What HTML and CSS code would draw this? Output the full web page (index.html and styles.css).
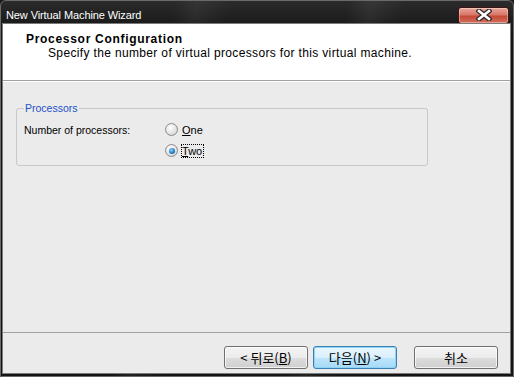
FILE: index.html
```html
<!doctype html>
<html>
  <head>
    <title>New Virtual Machine Wizard</title>
    <link rel="stylesheet" href="styles.css">
  </head>
  <body>
    <div class="window">
      <div class="titlebar">
        <span class="title">New Virtual Machine Wizard</span>
        <button class="close" type="button" aria-label="Close">
          <svg width="16" height="12" viewBox="0 0 16 12">
            <path d="M3 2 L13 10 M13 2 L3 10" stroke="#2a2a2a" stroke-width="5" stroke-linecap="square"/>
            <path d="M3 2 L13 10 M13 2 L3 10" stroke="#fff" stroke-width="2.6" stroke-linecap="square"/>
          </svg>
        </button>
      </div>

      <div class="client">
        <div class="header">
          <div class="header-title">Processor Configuration</div>
          <div class="header-sub">Specify the number of virtual processors for this virtual machine.</div>
        </div>

        <div class="content">
          <fieldset class="group">
            <legend>Processors</legend>
            <div class="row">
              <span class="label">Number of processors:</span>
              <label class="radio">
                <span class="dot"></span>
                <span><u>O</u>ne</span>
              </label>
            </div>
            <div class="row">
              <span class="label"></span>
              <label class="radio checked">
                <span class="dot"></span>
                <span class="focus"><u>T</u>wo</span>
              </label>
            </div>
          </fieldset>
        </div>

        <div class="footer">
          <button class="btn" type="button">&lt; 뒤로(<u>B</u>)</button>
          <button class="btn default" type="button">다음(<u>N</u>) &gt;</button>
          <button class="btn cancel" type="button">취소</button>
        </div>
      </div>
    </div>
  </body>
</html>
```

FILE: styles.css
```css
html, body {
    margin: 0;
    padding: 0;
    background: #1b1b1b;
}
body {
    font-family: "Liberation Sans", Arial, sans-serif;
    font-size: 12px;
}

.window {
    width: 514px;
    height: 377px;
    box-sizing: border-box;
    display: flex;
    flex-direction: column;
    border: 1px solid #6a6a6a;
    border-radius: 6px 6px 0 0;
    background:
        linear-gradient(100deg, transparent 0 60%, rgba(255,255,255,0.06) 64%, transparent 70%),
        linear-gradient(100deg, transparent 0 30%, rgba(255,255,255,0.05) 34%, transparent 40%),
        linear-gradient(180deg, #2b2b2b 0, #161616 30px, #141414 100%);
}

/* title bar */
.titlebar {
    height: 23px;
    display: flex;
    align-items: center;
    padding: 0 4px 0 5px;
}
.title {
    color: #fff;
    font-size: 11px;
    letter-spacing: -0.1px;
    padding-top: 5px;
}
.close {
    margin-left: auto;
    margin-top: 5px;
    width: 51px;
    height: 17px;
    padding: 0;
    display: flex;
    align-items: center;
    justify-content: center;
    border: 1px solid #3d1410;
    border-radius: 3px;
    background: linear-gradient(180deg, #e9a699 0, #d8776a 45%, #c44a36 55%, #d5705d 100%);
    box-shadow: inset 0 0 0 1px rgba(255,255,255,0.35);
}

/* client area */
.client {
    flex: 1;
    margin: 0 3px 3px 2px;
    display: flex;
    flex-direction: column;
    background: #ebebeb;
    box-shadow: 0 0 0 1px #7a7a7a;
}

.header {
    height: 57px;
    box-sizing: border-box;
    padding: 8px 0 0 23px;
    background: #fff;
    border-bottom: 1px solid #a0a0a0;
    line-height: 14px;
    color: #000;
}
.header-title {
    font-weight: bold;
    letter-spacing: 0.7px;
}
.header-sub {
    margin-left: 22px;
    letter-spacing: 0.35px;
}

.content {
    flex: 1;
    padding: 19px 0 0 13px;
    border-top: 1px solid #fff;
    font-size: 10.5px;
}

/* group box */
.group {
    width: 412px;
    box-sizing: border-box;
    margin: 0;
    padding: 4px 0 4px 7px;
    border: 1px solid #c8c8c8;
    border-radius: 3px;
}
.group legend {
    padding: 0 1px;
    color: #1d52c8;
    line-height: 14px;
}
.row {
    display: flex;
    align-items: center;
    height: 21px;
}
.label {
    width: 141px;
}
.radio {
    display: flex;
    align-items: center;
    gap: 4px;
}
.dot {
    width: 11px;
    height: 11px;
    border-radius: 50%;
    border: 1px solid #8b8b8b;
    background: radial-gradient(circle at 40% 35%, #ffffff 0, #e6e6e6 50%, #c9c9c9 100%);
    display: flex;
    align-items: center;
    justify-content: center;
}
.checked .dot::after {
    content: "";
    width: 6px;
    height: 6px;
    border-radius: 50%;
    background: radial-gradient(circle at 40% 35%, #8fd3ff 0, #1f7ec8 55%, #0a3f7a 100%);
}
.radio span:last-child {
    font-size: 11px;
}
.focus {
    outline: 1px dotted #000;
    outline-offset: 0;
    padding-right: 1px;
}

/* footer */
.footer {
    height: 41px;
    box-sizing: border-box;
    display: flex;
    justify-content: flex-end;
    align-items: flex-start;
    padding: 13px 12px 0 0;
    border-top: 1px solid #a0a0a0;
}
.btn {
    width: 84px;
    height: 23px;
    margin-left: 5px;
    padding: 0;
    font-family: "Noto Sans CJK KR", "Liberation Sans", sans-serif;
    font-size: 13px;
    line-height: 1;
    color: #000;
    border: 1px solid #707070;
    border-radius: 3px;
    background: linear-gradient(180deg, #f3f3f3 0, #ececec 50%, #dddddd 50%, #cfcfcf 100%);
    box-shadow: inset 0 0 0 1px rgba(255,255,255,0.7);
}
.btn.default {
    border-color: #3c7fb1;
    background: linear-gradient(180deg, #eaf6fd 0, #d9f0fc 50%, #bee6fd 50%, #a7d9f5 100%);
    box-shadow: inset 0 0 0 1px #8fd3f5;
}
.btn.cancel {
    margin-left: 17px;
}
```
